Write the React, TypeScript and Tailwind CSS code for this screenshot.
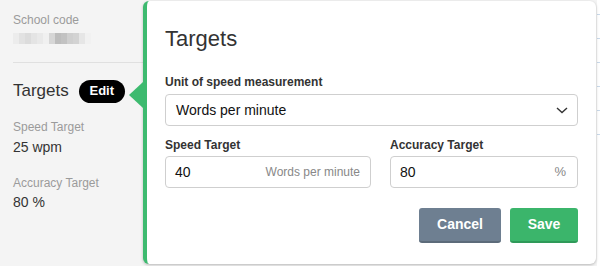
import type React from "react"

const mosaic = ["#ececec", "#e2e2e2", "#dcdcdc", "#e4e4e4", "#e9e9e9", "#f0f0f0", "#d6d6d6", "#bdbdbd", "#c2c2c2", "#cfcfcf", "#d3d3d3", "#e6e6e6", "#f1f1f1"]

const App: React.FC = () => {
  return (
    <div className="w-[600px] h-[266px] flex bg-[#f4f4f4] overflow-hidden" style={{ fontFamily: '"Liberation Sans", Arial, sans-serif' }}>
      {/* sidebar */}
      <div className="w-[143px] shrink-0 pl-[13px] pt-[13px]">
        <div className="text-[12px] leading-[14px] text-[#9b9b9b]">School code</div>
        <div className="flex mt-[6px] h-[11px] w-[78px] blur-[0.6px]">
          {mosaic.map((c, i) => (
            <div key={i} className="flex-1" style={{ backgroundColor: c }}></div>
          ))}
        </div>
        <div className="mt-[18px] border-t border-[#e0e0e0]"></div>
        <div className="flex items-center mt-[16px]">
          <span className="text-[17px] leading-[24px] text-[#333]">Targets</span>
          <span className="ml-[10px] h-[23px] w-[46px] rounded-full bg-black text-white text-[13px] font-bold flex items-center justify-center">Edit</span>
        </div>
        <div className="mt-[17px] text-[12px] leading-[14px] text-[#9b9b9b]">Speed Target</div>
        <div className="mt-[5px] text-[14px] leading-[16px] text-[#333]">25 wpm</div>
        <div className="mt-[21px] text-[12px] leading-[14px] text-[#9b9b9b]">Accuracy Target</div>
        <div className="mt-[4px] text-[14px] leading-[16px] text-[#333]">80 %</div>
      </div>

      {/* popover */}
      <div className="relative mt-[1px] mb-[2px] w-[453px] shrink-0 bg-white rounded-[6px] border-l-[4px] border-[#3dba6f] shadow-[0_1px_3px_rgba(0,0,0,0.25)] pl-[18px] pr-[18px] pt-[24px]">
        <div className="absolute left-[-18px] top-[81px] w-0 h-0 border-y-[13px] border-y-transparent border-r-[14px] border-r-[#3dba6f]"></div>
        <div className="text-[22px] leading-[28px] text-[#333]">Targets</div>
        <div className="mt-[22px] text-[12px] leading-[14px] font-bold text-[#333]">Unit of speed measurement</div>
        <div className="mt-[5px] h-[32px] rounded-[4px] border border-[#cfcfcf] flex items-center justify-between pl-[10px] pr-[8px]">
          <span className="text-[14px] text-[#111]">Words per minute</span>
          <svg width="14" height="14" viewBox="0 0 14 14" fill="none" stroke="#333" strokeWidth="1.4">
            <path d="M2 5l5 4.5L12 5" />
          </svg>
        </div>
        <div className="mt-[12px] grid grid-cols-[206px_188px] gap-x-[19px]">
          <div>
            <div className="text-[12px] leading-[14px] font-bold text-[#333]">Speed Target</div>
            <div className="mt-[4px] h-[32px] rounded-[4px] border border-[#cfcfcf] flex items-center justify-between pl-[9px] pr-[10px]">
              <span className="text-[14px] text-[#111]">40</span>
              <span className="text-[12px] text-[#888]">Words per minute</span>
            </div>
          </div>
          <div>
            <div className="text-[12px] leading-[14px] font-bold text-[#333]">Accuracy Target</div>
            <div className="mt-[4px] h-[32px] rounded-[4px] border border-[#cfcfcf] flex items-center justify-between pl-[9px] pr-[11px]">
              <span className="text-[14px] text-[#111]">80</span>
              <span className="text-[13px] text-[#888]">%</span>
            </div>
          </div>
        </div>
        <div className="mt-[20px] flex justify-end gap-[9px]">
          <button className="h-[35px] w-[82px] rounded-[3px] bg-[#6e7f91] border-b-[2px] border-[#5c6b7a] text-white text-[14px] font-bold">Cancel</button>
          <button className="h-[35px] w-[68px] rounded-[3px] bg-[#3bb56b] border-b-[2px] border-[#2f9a59] text-white text-[14px] font-bold">Save</button>
        </div>
      </div>

      {/* page behind */}
      <div className="flex-1 ml-[1px] bg-white flex flex-col pt-[14px] gap-[23px]">
        <div className="border-t border-[#c9d9ea]"></div>
        <div className="border-t border-[#c9d9ea]"></div>
        <div className="border-t border-[#c9d9ea]"></div>
        <div className="border-t border-[#c9d9ea]"></div>
        <div className="border-t border-[#c9d9ea]"></div>
        <div className="border-t border-[#c9d9ea]"></div>
      </div>
    </div>
  )
}

export default App
